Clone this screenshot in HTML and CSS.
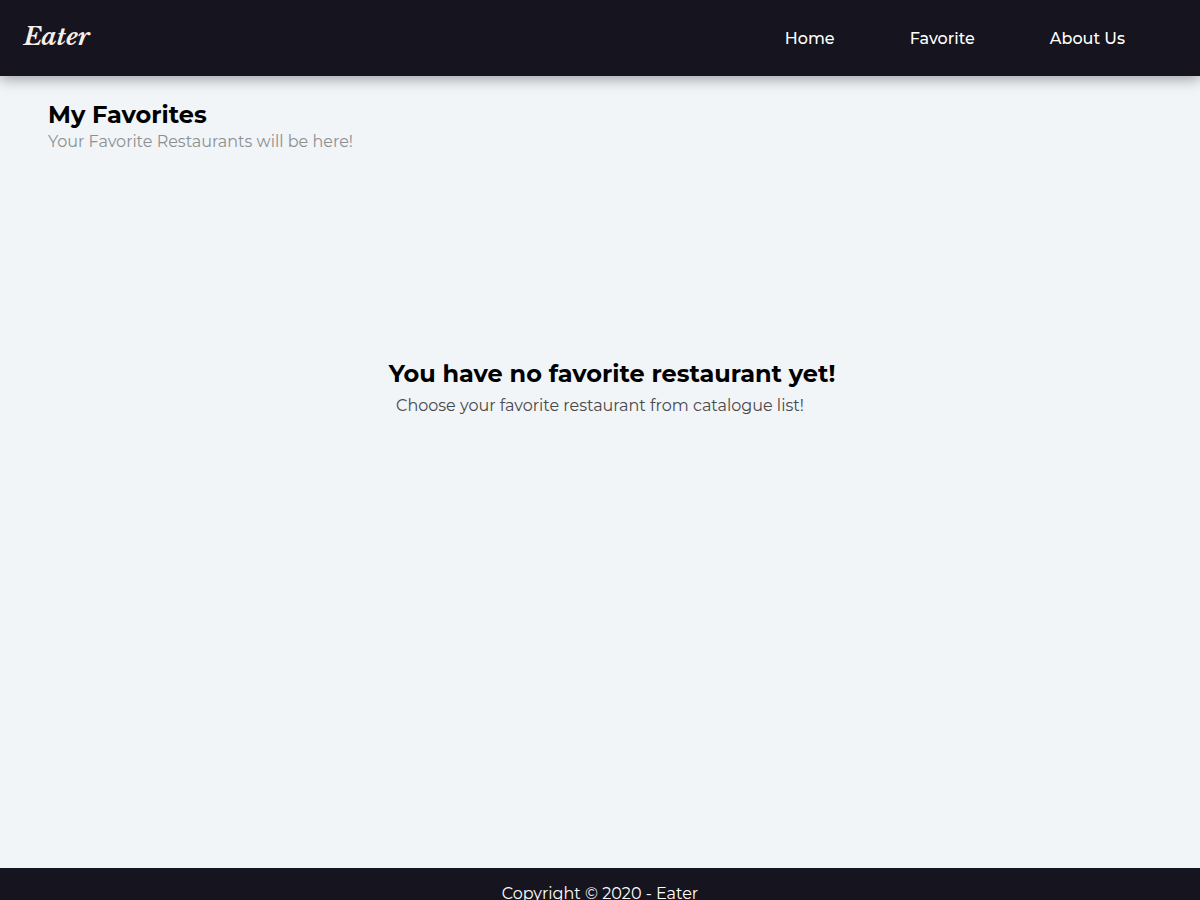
FILE: index.html
```html
<!DOCTYPE html>
<html lang="en">
<head>
<meta charset="utf-8">
<meta name="viewport" content="width=device-width, initial-scale=1">
<title>Eater</title>
<link rel="stylesheet" href="styles.css">
</head>
<body>
<header class="app-bar">
  <a class="brand" href="#">Eater</a>
  <nav class="nav">
    <a class="nav-link" href="#">Home</a>
    <a class="nav-link" href="#">Favorite</a>
    <a class="nav-link" href="#">About Us</a>
  </nav>
</header>
<main class="content">
  <h1 class="heading">My Favorites</h1>
  <p class="subtitle">Your Favorite Restaurants will be here!</p>
  <section class="empty">
    <h2 class="heading">You have no favorite restaurant yet!</h2>
    <p class="empty-text">Choose your favorite restaurant from catalogue list!</p>
  </section>
</main>
<footer class="footer">
  <p class="copyright">Copyright © 2020 - Eater</p>
</footer>
</body>
</html>
```
FILE: styles.css
```css
* {
  box-sizing: border-box;
  margin: 0;
  padding: 0;
}

body {
  display: flex;
  flex-direction: column;
  height: 100vh;
  overflow: hidden;
  background: #f1f5f8;
  color: #000;
  font-family: Montserrat, "Open Sans", sans-serif;
  font-size: 16px;
  line-height: 20px;
}

.app-bar {
  display: flex;
  justify-content: space-between;
  align-items: center;
  padding: 16px 75px 18px 24px;
  background: #16141e;
  box-shadow: 0 4px 12px rgba(22, 20, 30, 0.35);
}

.brand {
  color: #f6efe9;
  font-family: "Libre Baskerville", "Liberation Serif", serif;
  font-size: 24px;
  font-style: italic;
  font-weight: 700;
  line-height: 42px;
  text-decoration: none;
}

.nav {
  display: flex;
  gap: 75px;
  padding-top: 4px;
}

.nav-link {
  color: #fff;
  font-weight: 500;
  text-decoration: none;
}

.content {
  display: flex;
  flex: 1;
  flex-direction: column;
  padding: 24px 48px 0;
}

.heading {
  font-size: 24px;
  font-weight: 700;
  line-height: 30px;
}

.subtitle {
  color: #8d9093;
  line-height: 24px;
}

.empty {
  display: flex;
  flex-direction: column;
  align-items: center;
  padding-top: 205px;
}

.empty .heading {
  padding-left: 24px;
}

.empty-text {
  padding-top: 7px;
  color: #48494b;
}

.footer {
  height: 32px;
  padding-top: 16px;
  background: #16141e;
  color: #fff;
  text-align: center;
}
```
